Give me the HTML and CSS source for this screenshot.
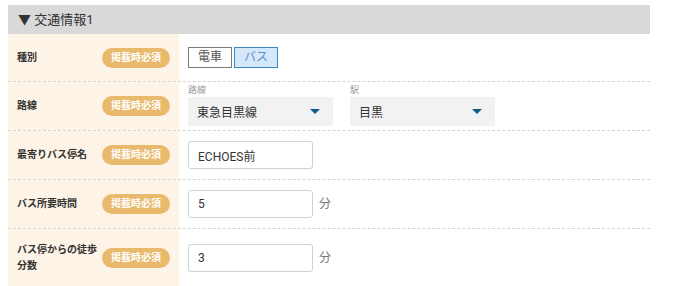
FILE: index.html
```
<!DOCTYPE html>
<html lang="ja">
<head>
    <meta charset="UTF-8">
    <meta name="viewport" content="width=device-width, initial-scale=1.0">
    <title>交通情報</title>
    <link rel="stylesheet" href="styles.css">
</head>
<body>
    <div class="panel">
        <div class="panel-head">▼ 交通情報1</div>

        <div class="row first">
            <div class="row-label">
                <span class="label-text">種別</span>
                <span class="badge">掲載時必須</span>
            </div>
            <div class="row-body">
                <div class="toggle">
                    <button class="toggle-btn" type="button">電車</button>
                    <button class="toggle-btn active" type="button">バス</button>
                </div>
            </div>
        </div>

        <div class="row">
            <div class="row-label">
                <span class="label-text">路線</span>
                <span class="badge">掲載時必須</span>
            </div>
            <div class="row-body pair">
                <div class="field">
                    <span class="sub-label">路線</span>
                    <div class="select">東急目黒線<span class="caret"></span></div>
                </div>
                <div class="field">
                    <span class="sub-label">駅</span>
                    <div class="select">目黒<span class="caret"></span></div>
                </div>
            </div>
        </div>

        <div class="row">
            <div class="row-label">
                <span class="label-text">最寄りバス停名</span>
                <span class="badge">掲載時必須</span>
            </div>
            <div class="row-body">
                <input class="text-input" type="text" value="ECHOES前">
            </div>
        </div>

        <div class="row">
            <div class="row-label">
                <span class="label-text">バス所要時間</span>
                <span class="badge">掲載時必須</span>
            </div>
            <div class="row-body">
                <input class="text-input" type="text" value="5">
                <span class="unit">分</span>
            </div>
        </div>

        <div class="row last">
            <div class="row-label">
                <span class="label-text">バス停からの徒歩<br>分数</span>
                <span class="badge">掲載時必須</span>
            </div>
            <div class="row-body">
                <input class="text-input" type="text" value="3">
                <span class="unit">分</span>
            </div>
        </div>
    </div>
</body>
</html>
```

FILE: styles.css
```
body {
    margin: 0;
    padding: 5px 0 0 8px;
    font-family: Roboto, "Noto Sans CJK JP", sans-serif;
    color: #333;
    background: #fff;
}
.panel {
    width: 642px;
}
.panel-head {
    height: 29px;
    line-height: 29px;
    padding-left: 10px;
    background: #d9d9d9;
    font-size: 13px;
    color: #333;
}
.row {
    display: flex;
    border-bottom: 1px dashed #d4d4d4;
}
.row.last {
    border-bottom: none;
}
.row-label {
    width: 171px;
    flex-shrink: 0;
    box-sizing: border-box;
    padding: 0 9px;
    background: #fdf3e6;
    display: flex;
    align-items: center;
    justify-content: space-between;
    font-size: 10px;
    font-weight: bold;
    line-height: 16px;
}
.row.last .row-label {
    padding-top: 13px;
    padding-bottom: 13px;
}
.badge {
    flex-shrink: 0;
    width: 68px;
    height: 20px;
    line-height: 20px;
    border-radius: 10px;
    background: #e9b96c;
    color: #fff;
    text-align: center;
    font-size: 10px;
    font-weight: bold;
}
.row-body {
    flex: 1;
    height: 48px;
    box-sizing: border-box;
    padding-left: 9px;
    display: flex;
    align-items: center;
}
.row.first .row-body {
    height: 47px;
}
.row.last .row-body {
    height: auto;
}
.toggle {
    display: flex;
    gap: 2px;
}
.toggle-btn {
    height: 21px;
    padding: 0 9px;
    border: 1px solid #7a7a7a;
    background: #fff;
    color: #555;
    font-family: inherit;
    font-size: 12px;
    line-height: 19px;
    border-radius: 0;
}
.toggle-btn.active {
    border-color: #3a86c0;
    background: #d5e7fb;
    color: #5b8fc0;
}
.pair {
    gap: 17px;
    align-items: flex-start;
    padding-top: 2px;
}
.field {
    display: flex;
    flex-direction: column;
}
.sub-label {
    height: 13px;
    font-size: 9px;
    color: #999;
    line-height: 13px;
}
.select {
    width: 145px;
    height: 29px;
    box-sizing: border-box;
    padding: 0 13px 0 9px;
    background: #f2f2f2;
    display: flex;
    align-items: center;
    justify-content: space-between;
    font-size: 12px;
    color: #333;
}
.caret {
    width: 0;
    height: 0;
    border-left: 5px solid transparent;
    border-right: 5px solid transparent;
    border-top: 5px solid #125c8c;
}
.text-input {
    width: 125px;
    height: 28px;
    box-sizing: border-box;
    padding: 0 9px;
    border: 1px solid #cdd0d6;
    border-radius: 3px;
    font-family: inherit;
    font-size: 12px;
    color: #333;
    outline: none;
}
.unit {
    margin-left: 6px;
    font-size: 12px;
    line-height: 16px;
    color: #777;
}
```
